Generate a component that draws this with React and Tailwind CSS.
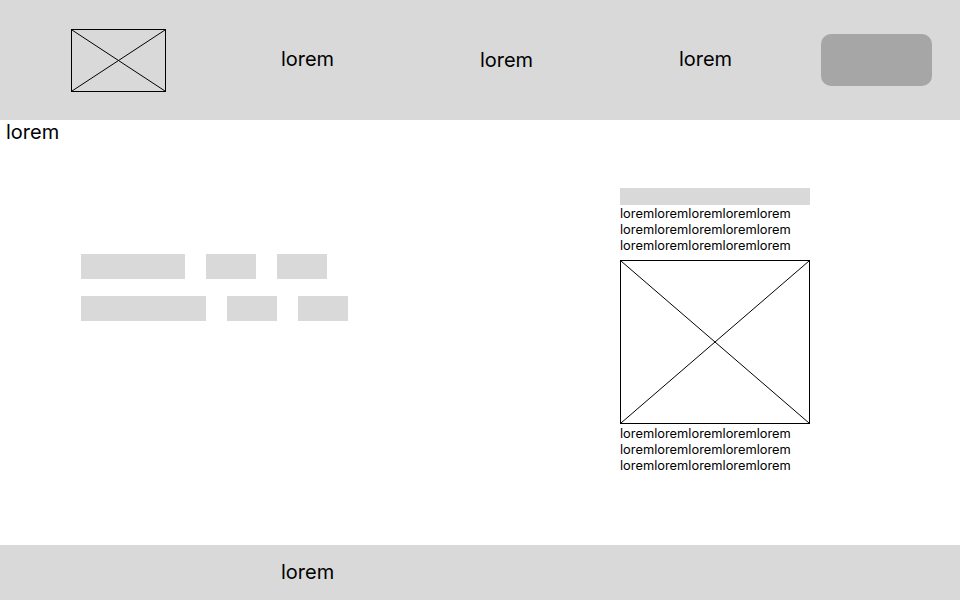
const Placeholder = ({ className }) => (
    <div className={`border border-black ${className}`}>
        <svg className="w-full h-full block" viewBox="0 0 100 100" preserveAspectRatio="none">
            <line x1="0" y1="0" x2="100" y2="100" stroke="black" strokeWidth="1" vectorEffect="non-scaling-stroke" />
            <line x1="100" y1="0" x2="0" y2="100" stroke="black" strokeWidth="1" vectorEffect="non-scaling-stroke" />
        </svg>
    </div>
);

const App = () => {
    const navItems = ["lorem", "lorem", "lorem"];
    const rows = [
        [104, 50, 50],
        [125, 50, 50],
    ];
    const lines = ["loremloremloremloremlorem", "loremloremloremloremlorem", "loremloremloremloremlorem"];

    return (
        <div className="w-[960px] h-[600px] flex flex-col bg-white text-black font-['Inter',sans-serif]">
            {/* Header */}
            <header className="h-[120px] shrink-0 bg-[#d9d9d9] flex items-center">
                <Placeholder className="ml-[71px] w-[95px] h-[63px]" />
                <nav className="ml-[42px] flex items-center">
                    {navItems.map((item, i) => (
                        <div
                            key={i}
                            className={`w-[199px] text-center text-[20px] leading-[24px] ${i === 1 ? "" : "mb-[2px]"}`}
                        >
                            {item}
                        </div>
                    ))}
                </nav>
                <button className="ml-[16px] w-[111px] h-[52px] rounded-[10px] bg-[#a6a6a6]"></button>
            </header>

            {/* Main */}
            <main className="flex-1">
                <p className="pl-[6px] text-[20px] leading-[24px]">lorem</p>
                <div className="flex">
                    {/* Left blocks */}
                    <div className="w-[620px] pl-[81px] pt-[110px] flex flex-col gap-[17px]">
                        {rows.map((row, r) => (
                            <div key={r} className="flex gap-[21px]">
                                {row.map((w, i) => (
                                    <div key={i} className="h-[25px] bg-[#d9d9d9]" style={{ width: w }} />
                                ))}
                            </div>
                        ))}
                    </div>

                    {/* Right card */}
                    <div className="w-[190px] pt-[44px] flex flex-col">
                        <div className="h-[17px] bg-[#d9d9d9]" />
                        <div className="pt-[1px] text-[12.85px] leading-[16px]">
                            {lines.map((l, i) => (
                                <p key={i}>{l}</p>
                            ))}
                        </div>
                        <Placeholder className="mt-[6px] w-[190px] h-[164px]" />
                        <div className="pt-[2px] text-[12.85px] leading-[16px]">
                            {lines.map((l, i) => (
                                <p key={i}>{l}</p>
                            ))}
                        </div>
                    </div>
                </div>
            </main>

            {/* Footer */}
            <footer className="h-[55px] shrink-0 bg-[#d9d9d9] flex items-center pl-[281px] pb-[1px]">
                <span className="text-[20px] leading-[24px]">lorem</span>
            </footer>
        </div>
    );
};

export default App;
